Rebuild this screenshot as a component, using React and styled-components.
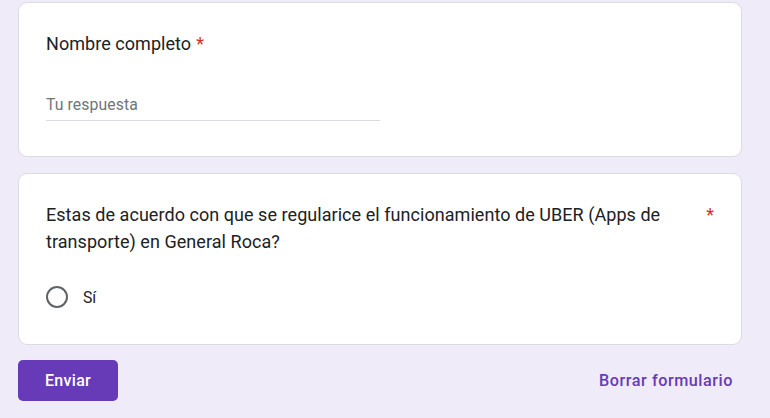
import React from "react";
import styled, { createGlobalStyle } from "styled-components";

const Global = createGlobalStyle`
  html, body { margin: 0; padding: 0; background: #f0ebf8; }
  body { font-family: Roboto, "Noto Sans", Arial, sans-serif; }
  * { box-sizing: border-box; }
`;

const Page = styled.div`
  width: 770px;
  height: 418px;
  padding: 2px 28px 0 18px;
  display: flex;
  flex-direction: column;
  overflow: hidden;
`;

const Card = styled.div`
  background: #fff;
  border: 1px solid #dadce0;
  border-radius: 9px;
  padding: ${(p) => p.$pad};
  margin-bottom: ${(p) => p.$gap};
`;

const TitleRow = styled.div`
  display: flex;
  align-items: flex-start;
  font-size: 18px;
  line-height: 27px;
  color: #202124;
  letter-spacing: 0.05px;
`;

const TitleText = styled.span`
  flex: ${(p) => (p.$grow ? 1 : "none")};
`;

const Required = styled.span`
  color: #d93025;
  padding-left: 5px;
`;

const Input = styled.div`
  width: 50%;
  margin-top: 36px;
  font-size: 15.75px;
  line-height: 24px;
  color: #70757a;
  padding-bottom: 3px;
  border-bottom: 1px solid #dadce0;
  letter-spacing: 0.1px;
`;

const Option = styled.label`
  display: flex;
  align-items: center;
  height: 40px;
  margin-top: 22px;
  gap: 15px;
  font-size: 15.75px;
  color: #202124;
`;

const Radio = styled.span`
  width: 22px;
  height: 22px;
  border-radius: 50%;
  border: 2px solid #5f6368;
  flex: none;
`;

const Footer = styled.div`
  display: flex;
  align-items: center;
  justify-content: space-between;
  padding-right: 9px;
`;

const Submit = styled.button`
  width: 100px;
  height: 41px;
  border: none;
  border-radius: 5px;
  background: #673ab7;
  color: #fff;
  font-family: Roboto, Arial, sans-serif;
  font-weight: 500;
  font-size: 16px;
  letter-spacing: 0.3px;
`;

const Clear = styled.span`
  color: #673ab7;
  font-weight: 500;
  font-size: 16.2px;
  letter-spacing: 0.55px;
`;

export default function App() {
  return (
    <>
      <Global />
      <Page>
        <Card $pad="27px 27px 35px" $gap="16px">
          <TitleRow>
            <TitleText>Nombre completo</TitleText>
            <Required>*</Required>
          </TitleRow>
          <Input>Tu respuesta</Input>
        </Card>
        <Card $pad="27px 27px 27px" $gap="15px">
          <TitleRow>
            <TitleText $grow>
              Estas de acuerdo con que se regularice el funcionamiento de UBER
              (Apps de transporte) en General Roca?
            </TitleText>
            <Required>*</Required>
          </TitleRow>
          <Option>
            <Radio />
            Sí
          </Option>
        </Card>
        <Footer>
          <Submit>Enviar</Submit>
          <Clear>Borrar formulario</Clear>
        </Footer>
      </Page>
    </>
  );
}
